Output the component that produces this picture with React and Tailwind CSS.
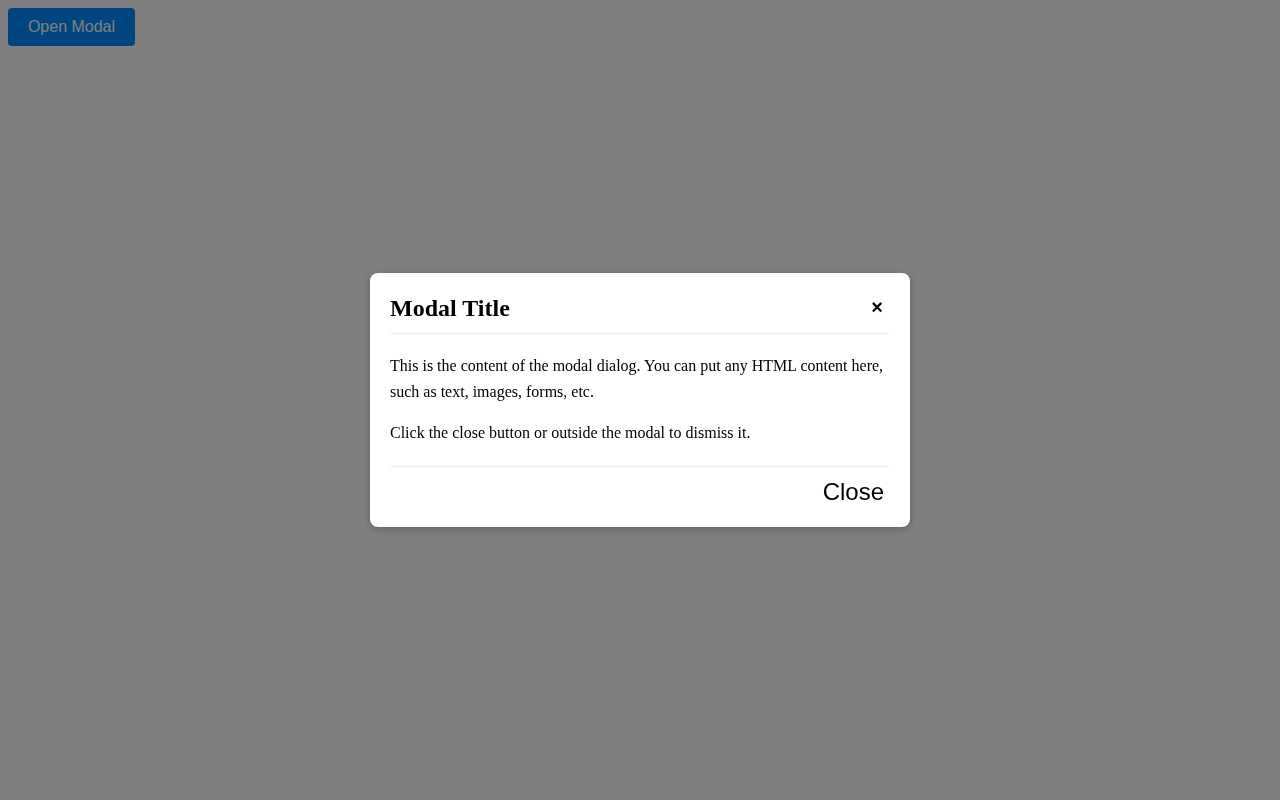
import { useState } from 'react';

export default function App() {
  const [open, setOpen] = useState(true);

  return (
    <div className="min-h-screen bg-white" style={{ fontFamily: '"Liberation Serif", serif' }}>
      <button
        onClick={() => setOpen(true)}
        className="m-2 w-[127px] h-[38px] rounded bg-[#008aff] text-white text-base"
        style={{ fontFamily: '"Liberation Sans", Arial, sans-serif' }}
      >
        Open Modal
      </button>

      {open && (
        <div
          className="fixed inset-0 bg-black/50 flex items-center justify-center"
          onClick={() => setOpen(false)}
        >
          <div
            className="w-[540px] bg-white rounded-lg p-5 shadow-[0_2px_8px_rgba(0,0,0,0.25)] text-black"
            onClick={e => e.stopPropagation()}
          >
            <div className="flex items-center justify-between pb-3 border-b border-[#eeeeee]">
              <h2 className="text-2xl font-bold leading-[28px] pt-px -mb-px">Modal Title</h2>
              <button
                onClick={() => setOpen(false)}
                className="text-[20px] font-bold leading-none px-[7px]"
                style={{ fontFamily: '"Liberation Sans", Arial, sans-serif' }}
              >
                ×
              </button>
            </div>

            <div className="pt-[19px] pb-[20px] flex flex-col gap-4 text-base leading-[1.6]">
              <p>
                This is the content of the modal dialog. You can put any HTML content here,
                such as text, images, forms, etc.
              </p>
              <p>Click the close button or outside the modal to dismiss it.</p>
            </div>

            <div className="border-t border-[#eeeeee] pt-[11px] flex justify-end">
              <button
                onClick={() => setOpen(false)}
                className="text-[24px] leading-[28px] px-[6px] pb-px"
                style={{ fontFamily: '"Liberation Sans", Arial, sans-serif' }}
              >
                Close
              </button>
            </div>
          </div>
        </div>
      )}
    </div>
  );
}
